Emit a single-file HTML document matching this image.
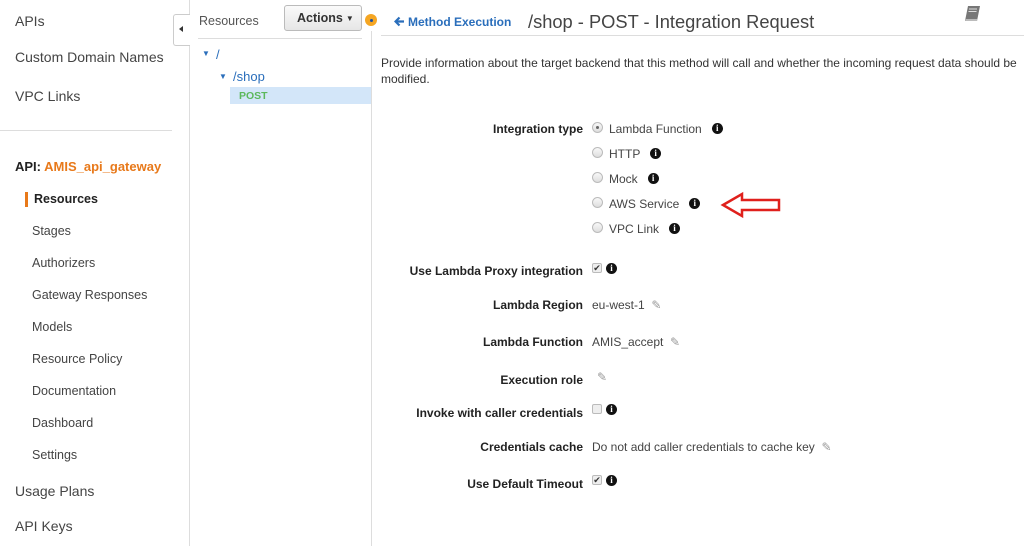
<!DOCTYPE html>
<html><head><meta charset="utf-8"><style>
*{margin:0;padding:0;box-sizing:border-box}
body{width:1024px;height:546px;overflow:hidden;background:#fff;font-family:"Liberation Sans",sans-serif;color:#444;position:relative}
.a{position:absolute;white-space:nowrap}
.nav{font-size:14px;color:#444}
.sub{font-size:12.5px;color:#444}
.lbl{font-size:12px;font-weight:bold;color:#222;text-align:right;width:300px;left:283px}
.v{font-size:12px;color:#444;left:592px}
.info{display:inline-block;overflow:hidden;width:11px;height:11px;border-radius:50%;background:#111;color:#fff;font:bold 9px "Liberation Serif",serif;text-align:center;line-height:11px;vertical-align:-1px}
.radio{position:absolute;width:11px;height:11px;border-radius:50%;border:1px solid #bbb;background:linear-gradient(#f8f8f8,#ddd)}
.cb{position:absolute;width:10px;height:10px;border:1px solid #bbb;background:#eee;border-radius:2px;font-size:9px;line-height:8px;text-align:center;color:#333}
.pen{color:#999;font-size:12px}
</style></head><body>
<!-- sidebar -->
<div class="a nav" style="left:15px;top:13px">APIs</div>
<div class="a nav" style="left:15px;top:49px">Custom Domain Names</div>
<div class="a nav" style="left:15px;top:88px">VPC Links</div>
<div class="a" style="left:0;top:130px;width:172px;height:1px;background:#ddd"></div>
<div class="a" style="left:15px;top:159px;font-size:13px;font-weight:bold;color:#222">API: <span style="color:#e8791a">AMIS_api_gateway</span></div>
<div class="a" style="left:25px;top:192px;width:3px;height:15px;background:#e8791a"></div>
<div class="a" style="left:34px;top:192px;font-size:12.5px;font-weight:bold;color:#222">Resources</div>
<div class="a sub" style="left:32px;top:224px">Stages</div>
<div class="a sub" style="left:32px;top:256px">Authorizers</div>
<div class="a sub" style="left:32px;top:288px">Gateway Responses</div>
<div class="a sub" style="left:32px;top:320px">Models</div>
<div class="a sub" style="left:32px;top:352px">Resource Policy</div>
<div class="a sub" style="left:32px;top:384px">Documentation</div>
<div class="a sub" style="left:32px;top:416px">Dashboard</div>
<div class="a sub" style="left:32px;top:448px">Settings</div>
<div class="a nav" style="left:15px;top:483px">Usage Plans</div>
<div class="a nav" style="left:15px;top:518px">API Keys</div>
<div class="a" style="left:189px;top:0;width:1px;height:546px;background:#ddd"></div>
<div class="a" style="left:173px;top:14px;width:17px;height:32px;border:1px solid #ccc;border-right:none;border-radius:3px 0 0 3px;background:#fff"></div>
<div class="a" style="left:179px;top:26px;width:0;height:0;border-top:3px solid transparent;border-bottom:3px solid transparent;border-right:4px solid #333"></div>
<!-- resources panel -->
<div class="a" style="left:199px;top:14px;font-size:12.5px;color:#555">Resources</div>
<div class="a" style="left:284px;top:5px;width:78px;height:26px;border:1px solid #bbb;border-radius:3px;background:linear-gradient(#fafafa,#e6e6e6);font-size:12.5px;font-weight:bold;color:#333;line-height:24px;padding-left:12px">Actions<span style="font-size:8px;margin-left:3px;vertical-align:1px">▼</span></div>
<div class="a" style="left:198px;top:38px;width:164px;height:1px;background:#ddd"></div>
<div class="a" style="left:365px;top:14px;width:12px;height:12px;border-radius:50%;background:#f5a623"></div>
<div class="a" style="left:370px;top:19px;width:3px;height:3px;border-radius:50%;background:#1f4fa0"></div>
<div class="a" style="left:371px;top:31px;width:1px;height:515px;background:#ddd"></div>
<div class="a" style="left:202px;top:49px;font-size:8px;color:#2a6ebb">▼</div>
<div class="a" style="left:216px;top:47px;font-size:13px;color:#2a6ebb">/</div>
<div class="a" style="left:219px;top:72px;font-size:8px;color:#2a6ebb">▼</div>
<div class="a" style="left:233px;top:69px;font-size:13px;color:#2a6ebb">/shop</div>
<div class="a" style="left:230px;top:87px;width:141px;height:17px;background:#d3e6f9"></div>
<div class="a" style="left:239px;top:90px;font-size:10.5px;font-weight:bold;color:#5cb85c">POST</div>
<!-- main -->
<svg class="a" style="left:394px;top:16px" width="11" height="11" viewBox="0 0 11 11"><path d="M10 5.5H2M5.5 1.5L1.5 5.5l4 4" fill="none" stroke="#2a6ebb" stroke-width="2.2"/></svg>
<div class="a" style="left:408px;top:15px;font-size:12px;font-weight:bold;color:#2a6ebb">Method Execution</div>
<div class="a" style="left:528px;top:11px;font-size:18.3px;color:#444">/shop - POST - Integration Request</div>
<svg class="a" style="left:963px;top:5px" width="20" height="18" viewBox="0 0 20 18"><path d="M5 1h12l-3 15H2z" fill="#777"/><path d="M6 4h8M5.5 6.5h8" stroke="#ddd" stroke-width="1"/><path d="M2 16h12l0.5-2H3" fill="#bbb"/></svg>
<div class="a" style="left:381px;top:35px;width:643px;height:1px;background:#ddd"></div>
<div class="a" style="left:381px;top:55px;font-size:12px;color:#333;line-height:16px;white-space:normal;width:650px">Provide information about the target backend that this method will call and whether the incoming request data should be modified.</div>

<div class="a lbl" style="top:122px">Integration type</div>
<div class="radio" style="left:592px;top:122px"></div><div class="a" style="left:596px;top:126px;width:3px;height:3px;border-radius:50%;background:#666"></div>
<div class="a v" style="left:609px;top:122px">Lambda Function &nbsp;&nbsp;<span class="info">i</span></div>
<div class="radio" style="left:592px;top:147px"></div>
<div class="a v" style="left:609px;top:147px">HTTP &nbsp;&nbsp;<span class="info">i</span></div>
<div class="radio" style="left:592px;top:172px"></div>
<div class="a v" style="left:609px;top:172px">Mock &nbsp;&nbsp;<span class="info">i</span></div>
<div class="radio" style="left:592px;top:197px"></div>
<div class="a v" style="left:609px;top:197px">AWS Service &nbsp;&nbsp;<span class="info">i</span></div>
<div class="radio" style="left:592px;top:222px"></div>
<div class="a v" style="left:609px;top:222px">VPC Link &nbsp;&nbsp;<span class="info">i</span></div>
<svg class="a" style="left:720px;top:191px" width="62" height="28" viewBox="0 0 62 28"><path d="M3 14L22 3v6h37v10H22v6z" fill="none" stroke="#e0201c" stroke-width="2.5" stroke-linejoin="miter"/></svg>

<div class="a lbl" style="top:264px">Use Lambda Proxy integration</div>
<div class="cb" style="left:592px;top:263px">✔</div><div class="a" style="left:606px;top:263px;line-height:11px"><span class="info" style="vertical-align:top">i</span></div>
<div class="a lbl" style="top:298px">Lambda Region</div>
<div class="a v" style="top:298px">eu-west-1 &nbsp;<span class="pen">✎</span></div>
<div class="a lbl" style="top:335px">Lambda Function</div>
<div class="a v" style="top:335px">AMIS_accept &nbsp;<span class="pen">✎</span></div>
<div class="a lbl" style="top:373px">Execution role</div>
<div class="a v" style="left:597px;top:370px"><span class="pen">✎</span></div>
<div class="a lbl" style="top:406px">Invoke with caller credentials</div>
<div class="cb" style="left:592px;top:404px"></div><div class="a" style="left:606px;top:404px;line-height:11px"><span class="info" style="vertical-align:top">i</span></div>
<div class="a lbl" style="top:440px">Credentials cache</div>
<div class="a v" style="top:440px">Do not add caller credentials to cache key &nbsp;<span class="pen">✎</span></div>
<div class="a lbl" style="top:477px">Use Default Timeout</div>
<div class="cb" style="left:592px;top:475px">✔</div><div class="a" style="left:606px;top:475px;line-height:11px"><span class="info" style="vertical-align:top">i</span></div>
</body></html>
